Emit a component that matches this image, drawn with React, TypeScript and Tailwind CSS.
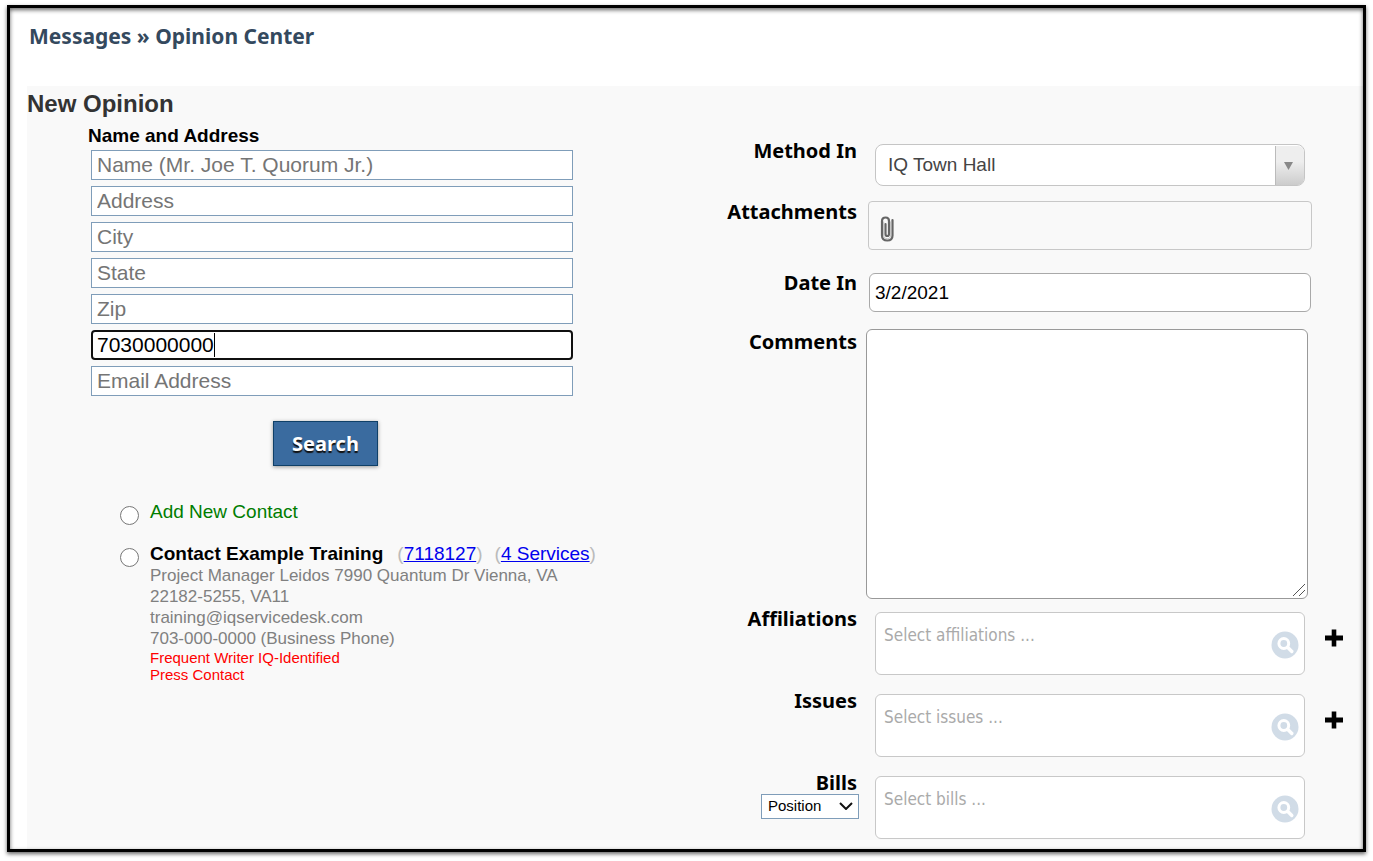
import { useState } from "react";
import type { ReactNode } from "react";

const contactFields = [
  { id: "name", label: "Name (Mr. Joe T. Quorum Jr.)" },
  { id: "address", label: "Address" },
  { id: "city", label: "City" },
  { id: "state", label: "State" },
  { id: "zip", label: "Zip" },
  { id: "phone", label: "Phone" },
  { id: "email", label: "Email Address" },
];

function Caption({ id, children }: { id: string; children: ReactNode }) {
  return (
    <label
      htmlFor={id}
      className="pr-0.5 text-right font-['Noto_Sans',sans-serif] text-[20px] leading-7 font-bold text-black"
    >
      {children}
    </label>
  );
}

function Row({ id, label, extra, className, children }: {
  id: string;
  label: string;
  extra?: ReactNode;
  className: string;
  children: ReactNode;
}) {
  return (
    <div className={`flex items-start ${className}`}>
      <div className="flex w-[164px] shrink-0 flex-col items-end">
        <Caption id={id}>{label}</Caption>
        {extra}
      </div>
      {children}
    </div>
  );
}

function PaperclipIcon() {
  return (
    <svg className="h-[26px] w-4" viewBox="0 0 16 26" fill="none" strokeLinecap="round">
      <path d="M13.500 4v15.500c0 3-2 5-5.200 5s-5.300-2-5.300-5V5c0-2.300 1.400-3.500 3.600-3.500S10 2.700 10 5v13c0 1.300-.5 2-1.700 2s-1.800-.7-1.800-2V8" stroke="#666" strokeWidth="2.200" />
      <path d="M4.700 6v13c0 2.500 1.400 3.700 3.600 3.700s3.400-1.200 3.400-3.700V6" stroke="#bbb" strokeWidth=".9" />
    </svg>
  );
}

function LookupIcon() {
  return (
    <svg className="size-7" viewBox="0 0 28 28" fill="none">
      <circle cx="14" cy="14" r="13.500" fill="#d1dce7" />
      <circle cx="12.800" cy="12.500" r="4.900" stroke="#fff" strokeWidth="3" />
      <path d="M16.800 16.500l4 4" stroke="#fff" strokeWidth="3.400" strokeLinecap="round" />
    </svg>
  );
}

function Lookup({ id, placeholder, addLabel }: { id: string; placeholder: string; addLabel?: string }) {
  return (
    <>
      <div className="mt-[7px] ml-4 flex h-[63px] min-w-0 flex-1 rounded-md border border-[#c8c8c8] bg-white">
        <input
          id={id}
          placeholder={placeholder}
          className="mt-2 h-7 min-w-0 flex-1 bg-transparent pl-2 font-['DejaVu_Sans_Condensed','DejaVu_Sans',sans-serif] text-[17px] text-[#444] outline-none placeholder:text-[#aaa]"
        />
        <button type="button" aria-label={`Search ${id}`} className="mt-[18px] mr-[5px] size-7">
          <LookupIcon />
        </button>
      </div>
      <div className="flex w-[58px] shrink-0 justify-center pt-6">
        {addLabel && (
          <button type="button" aria-label={addLabel}>
            <svg className="size-[18px]" viewBox="0 0 18 18">
              <path d="M0 6.500h6.700V.500h4.600v6H18v5h-6.700v6H6.700v-6H0z" fill="#000" />
            </svg>
          </button>
        )}
      </div>
    </>
  );
}

export default function App() {
  const [values, setValues] = useState<Record<string, string>>({ phone: "7030000000" });
  const [date, setDate] = useState("3/2/2021");
  const [focused, setFocused] = useState("phone");

  return (
    <div className="bg-white px-[7px] pt-[5px] pb-[9px] font-['Liberation_Sans',Arial,sans-serif]">
      <div className="border-[3px] border-black pl-[17px] shadow-[0_2px_4px_rgba(0,0,0,0.6),inset_0_2px_4px_rgba(0,0,0,0.6)]">
        <h1 className="pt-3 pl-0.5 font-['Noto_Sans',sans-serif] text-[21px] leading-8 font-bold text-[#34495e]">
          Messages » Opinion Center
        </h1>

        <main className="mt-[34px] grid grid-cols-2 bg-black/[0.024] pb-2.5">
          <section>
            <h2 className="pt-1 text-2xl leading-7 font-bold text-[#333]">New Opinion</h2>
            <h3 className="ml-[61px] pt-1 text-[19px] leading-7 font-bold text-black">Name and Address</h3>
            <form className="mr-[122px] ml-16" onSubmit={e => e.preventDefault()}>
              <div className="flex flex-col gap-1.5">
                {contactFields.map(f => (
                  <div key={f.id} className="relative flex text-[21px]">
                    <input
                      id={f.id}
                      aria-label={f.label}
                      placeholder={f.label}
                      autoFocus={f.id === "phone"}
                      value={values[f.id] ?? ""}
                      onFocus={() => setFocused(f.id)}
                      onChange={e => setValues({ ...values, [f.id]: e.target.value })}
                      className="h-[30px] w-full border border-[#7f9db9] bg-white px-[5px] text-black caret-transparent outline-none placeholder:text-[#757575] focus:rounded-sm focus:border-2 focus:border-[#101010] focus:px-1"
                    />
                    {/* text cursor, one digit width per character */}
                    {focused === f.id && (
                      <span
                        className="pointer-events-none absolute top-[3px] h-6 w-px bg-black"
                        style={{ left: `calc(6px + ${(values[f.id] ?? "").length}ch)` }}
                      />
                    )}
                  </div>
                ))}
              </div>
              <button
                type="submit"
                className="mt-[25px] ml-[182px] h-[45px] w-[105px] border border-[#0f4068] bg-[#3a6b9f] font-['Noto_Sans',sans-serif] text-[20px] font-bold text-white shadow-[0_1px_4px_rgba(0,0,0,0.4)] [text-shadow:0_2px_1px_#111]"
              >
                Search
              </button>
            </form>

            <div className="mt-7 ml-[93px]">
              <div className="flex items-start">
                <input type="radio" name="contact" id="contact-new" className="mt-3 size-[19px] shrink-0" />
                <label htmlFor="contact-new" className="ml-[11px] pt-1 text-[19px] leading-7 text-[#007d00]">Add New Contact</label>
              </div>
              <div className="mt-2.5 flex items-start">
                <input type="radio" name="contact" id="contact-example" className="mt-3 size-[19px] shrink-0" />
                <div className="ml-[11px] pt-[7px] text-[17px] leading-[21px] text-[#808080]">
                  <p className="flex text-[19px] leading-[22px] text-[#bbb]">
                    <label htmlFor="contact-example" className="mr-3.5 font-bold text-black">Contact Example Training</label>
                    <span className="mr-3">(<a href="#contact" className="text-[#0000ee] underline">7118127</a>)</span>
                    <span>(<a href="#services" className="text-[#0000ee] underline">4 Services</a>)</span>
                  </p>
                  <p>Project Manager Leidos 7990 Quantum Dr Vienna, VA</p>
                  <p>22182-5255, VA11</p>
                  <p>training@iqservicedesk.com</p>
                  <p>703-000-0000 (Business Phone)</p>
                  <div className="text-[15px] leading-[17px] text-[#ff0000]">
                    <p>Frequent Writer IQ-Identified</p>
                    <p>Press Contact</p>
                  </div>
                </div>
              </div>
            </div>
          </section>

          <section className="pt-[51px]">
            <Row id="method" label="Method In" className="mb-3">
              <div className="relative mt-[7px] mr-[58px] ml-4 h-[42px] min-w-0 flex-1">
                <select
                  id="method"
                  className="h-full w-full appearance-none rounded-lg border border-[#c5c5c5] bg-white pl-3 text-[19px] text-[#444]"
                >
                  <option>IQ Town Hall</option>
                </select>
                <span className="pointer-events-none absolute top-0.5 right-px bottom-px flex w-[29px] items-center justify-center rounded-r-md border-l border-[#bbb] bg-linear-to-b from-[#eee] from-40% to-[#ccc]">
                  <svg className="mr-1 h-2 w-[9px]" viewBox="0 0 9 8">
                    <path d="M0 0h9L4.500 8z" fill="#888" />
                  </svg>
                </span>
              </div>
            </Row>

            <Row id="attachments" label="Attachments" className="mb-[19px]">
              <div className="mt-[3px] mr-[51px] ml-[9px] flex h-[49px] min-w-0 flex-1 items-center rounded border border-[#c8c8c8] pt-1.5 pl-2.5">
                <button type="button" id="attachments" aria-label="Add attachment">
                  <PaperclipIcon />
                </button>
              </div>
            </Row>

            <Row id="date" label="Date In" className="mb-4">
              <input
                id="date"
                value={date}
                onChange={e => setDate(e.target.value)}
                className="mt-1 mr-[52px] ml-2.5 h-[39px] min-w-0 flex-1 rounded-md border border-[#a9a9a9] bg-white px-[5px] text-[19px] text-black"
              />
            </Row>

            <Row id="comments" label="Comments" className="mb-1.5">
              <div className="relative mt-px mr-[55px] ml-[7px] flex h-[270px] min-w-0 flex-1">
                <textarea
                  id="comments"
                  className="w-full resize-none rounded-md border border-[#999] bg-white p-1.5 text-[19px]"
                />
                <svg className="pointer-events-none absolute right-0.5 bottom-0.5 size-3.5" viewBox="0 0 14 14">
                  <path d="M1 13L13 1M7 13l6-6" stroke="#555" />
                </svg>
              </div>
            </Row>

            <Row id="affiliations" label="Affiliations" className="mb-3">
              <Lookup id="affiliations" placeholder="Select affiliations ..." addLabel="Add affiliation" />
            </Row>

            <Row id="issues" label="Issues" className="mb-3">
              <Lookup id="issues" placeholder="Select issues ..." addLabel="Add issue" />
            </Row>

            <Row
              id="bills"
              label="Bills"
              className=""
              extra={
                <span className="relative -mt-[3px]">
                  <select aria-label="Position" className="h-[25px] w-[98px] appearance-none border border-[#7f9db9] bg-white pl-1.5 text-[15px] text-black">
                    <option>Position</option>
                  </select>
                  <svg className="pointer-events-none absolute top-2 right-1.5 h-2 w-3.5" viewBox="0 0 14 8" fill="none">
                    <path d="M1 1l6 6 6-6" stroke="#111" strokeWidth="2" />
                  </svg>
                </span>
              }
            >
              <Lookup id="bills" placeholder="Select bills ..." />
            </Row>
          </section>
        </main>
      </div>
    </div>
  );
}
